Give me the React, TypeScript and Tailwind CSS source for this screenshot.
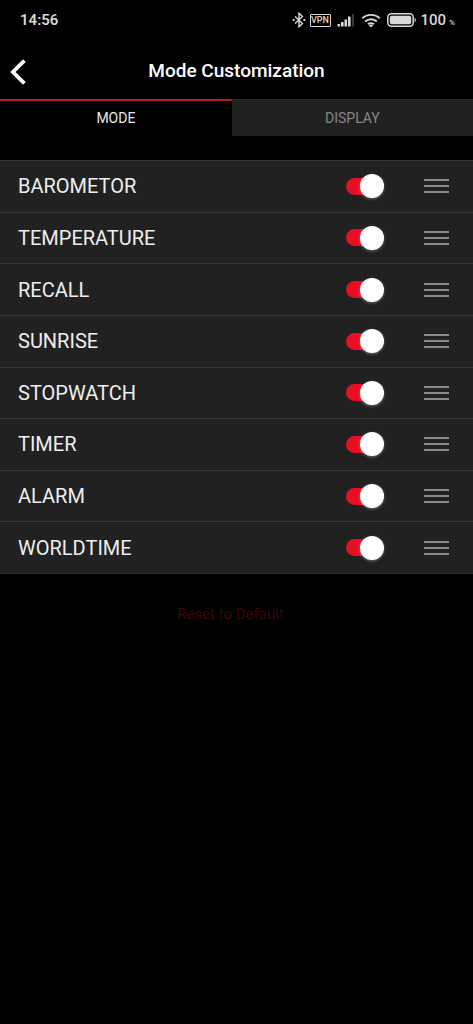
import { useState } from "react";

const MODES = [
  "BAROMETOR",
  "TEMPERATURE",
  "RECALL",
  "SUNRISE",
  "STOPWATCH",
  "TIMER",
  "ALARM",
  "WORLDTIME",
];

function StatusBar() {
  return (
    <div className="flex h-10 items-center justify-between pl-5 pr-[18px] text-[#d8d8d8]">
      <span className="text-[15px] font-semibold">14:56</span>
      <div className="flex items-center">
        <svg width="14" height="16" viewBox="0 0 14 16" fill="none" stroke="currentColor" strokeWidth="1.4">
          <path d="M3 4.5 10.5 11.5 7 14.8V1.2L10.5 4.5 3 11.5" />
          <path d="M0.8 8h1.8M11.4 8h1.8" strokeWidth="1.8" />
        </svg>
        <span className="ml-1 flex h-[13px] w-[21px] items-center justify-center rounded-[1px] border border-[#d8d8d8] text-[9px] leading-none font-medium">
          VPN
        </span>
        <svg className="ml-1.5" width="18" height="14" viewBox="0 0 18 14" fill="currentColor">
          <path d="M0.5 11h2.6v2.5H0.5zM4 9h2.6v4.5H4zM7.5 6.5h2.6v7H7.5zM11 3.5h2.6v10H11z" />
          <path d="M14.8 1H17v12.5h-2.2z" fill="#3a3a3a" />
        </svg>
        <svg className="ml-1.5" width="20" height="15" viewBox="0 0 20 15" fill="none" stroke="currentColor" strokeWidth="1.9">
          <path d="M1.3 5.4a12.6 12.6 0 0 1 17.4 0M4.2 8.5a8.4 8.4 0 0 1 11.6 0M7 11.3a4.4 4.4 0 0 1 6 0" />
          <path d="M10 14.6 7.9 12.4a3.2 3.2 0 0 1 4.2 0z" fill="currentColor" stroke="none" />
        </svg>
        <svg className="ml-1.5" width="30" height="14" viewBox="0 0 30 14" fill="currentColor">
          <rect x="0.8" y="0.8" width="25.4" height="12.4" rx="3.6" fill="none" stroke="currentColor" strokeWidth="1.5" />
          <rect x="2.8" y="2.8" width="21.4" height="8.4" rx="1.8" />
          <path d="M27.6 4.8c1.6.3 1.6 4.1 0 4.4z" />
        </svg>
        <span className="ml-1 flex items-baseline gap-[3px] text-[15px] leading-none font-medium">
          100<span className="text-[8px]">%</span>
        </span>
      </div>
    </div>
  );
}

function ModeRow({ name }: { name: string }) {
  const [on, setOn] = useState(true);
  const id = `mode-${name.toLowerCase()}`;

  return (
    <li className="flex items-center border-t border-[#343434] pl-[18px] pr-6">
      <label htmlFor={id} className="flex-1 text-[20px] leading-6 text-[#eeeeee]">
        {name}
      </label>
      <input
        id={id}
        type="checkbox"
        role="switch"
        checked={on}
        onChange={(e) => setOn(e.target.checked)}
        className="flex h-[17px] w-[38px] appearance-none items-center rounded-full bg-[#555555] before:size-6 before:shrink-0 before:rounded-full before:bg-white before:shadow-[0_1px_3px_rgba(255,255,255,0.35)] checked:justify-end checked:bg-[#e60f23]"
      />
      <button type="button" aria-label={`Move ${name}`} className="ml-10 flex w-[25px] flex-col gap-1">
        <span className="h-0.5 w-full bg-[#8a8a8a]" />
        <span className="h-0.5 w-full bg-[#8a8a8a]" />
        <span className="h-0.5 w-full bg-[#8a8a8a]" />
      </button>
    </li>
  );
}

export default function App() {
  const [tab, setTab] = useState("mode");
  const active = "border-t-2 border-[#b3192b] bg-black text-[#e8e8e8]";
  const idle = "border-t border-[#2c2c2c] bg-[#212121] text-[#868686]";

  return (
    <div className="min-h-screen bg-black font-['Roboto',sans-serif]">
      <StatusBar />

      <header className="grid h-[59px] grid-cols-[40px_1fr_40px] items-center pt-1">
        <button type="button" aria-label="Back" className="pl-2.5">
          <svg width="17" height="26" viewBox="0 0 17 26" fill="none" stroke="white" strokeWidth="3.8">
            <path d="M14.4 1.6 2.9 13l11.5 11.4" />
          </svg>
        </button>
        <h1 className="text-center text-[19px] font-medium text-white">Mode Customization</h1>
      </header>

      <div role="tablist" className="flex h-[37px] text-[14px]">
        <button
          type="button"
          role="tab"
          aria-selected={tab === "mode"}
          onClick={() => setTab("mode")}
          className={`w-[49%] ${tab === "mode" ? active : idle}`}
        >
          MODE
        </button>
        <button
          type="button"
          role="tab"
          aria-selected={tab === "display"}
          onClick={() => setTab("display")}
          className={`flex-1 ${tab === "display" ? active : idle}`}
        >
          DISPLAY
        </button>
      </div>

      <ul className="mt-6 grid min-h-[414px] auto-rows-fr border-b border-[#2c2c2c] bg-[#212121]">
        {MODES.map((name) => (
          <ModeRow key={name} name={name} />
        ))}
      </ul>

      <div className="mt-7 flex justify-center pr-3">
        <button type="button" className="text-[15px] leading-6 text-[#3a050a]">
          Reset to Default
        </button>
      </div>
    </div>
  );
}
